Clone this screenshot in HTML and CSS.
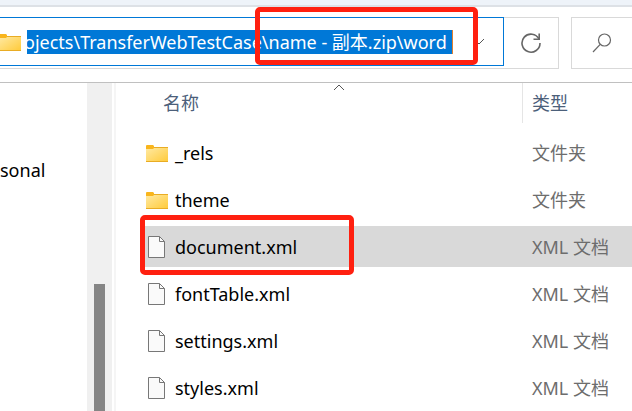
FILE: index.html
```html
<!DOCTYPE html>
<html lang="zh-CN">
<head>
  <meta charset="UTF-8">
  <meta name="viewport" content="width=device-width, initial-scale=1.0">
  <title>word</title>
  <link rel="stylesheet" href="styles.css">
</head>
<body>
  <svg class="defs" aria-hidden="true">
    <defs>
      <linearGradient id="fill" x1="0" y1="0" x2="1" y2="1">
        <stop offset="0" stop-color="#ffe9a2"></stop>
        <stop offset="1" stop-color="#ffca38"></stop>
      </linearGradient>
      <symbol id="folder" viewBox="0 0 22 18">
        <path d="M0 2Q0 1 1 1H7L8 2V3H22V6H0Z" fill="#f9b51c"></path>
        <path d="M0 5H7L8 4H22V18H0Z" fill="url(#fill)"></path>
        <path d="M8 3.5H22M0 17.5H22" stroke="#e9ac24" fill="none"></path>
      </symbol>
      <symbol id="file" viewBox="0 0 17 22">
        <path d="M.5 .5H11.5L16.5 5.5V21.5H.5Z" fill="#fafafa" stroke="#777"></path>
        <path d="M11.5 .5V5.5H16.5" fill="none" stroke="#777"></path>
      </symbol>
    </defs>
  </svg>

  <header class="toolbar">
    <div class="address">
      <div class="path">
        <svg class="folder"><use href="#folder"></use></svg>
        <input type="text" aria-label="地址" value="ojects\TransferWebTestCase\name - 副本.zip\word">
        <button class="history" aria-label="以前的位置">
          <svg width="12" height="8" viewBox="0 0 12 8"><path d="M1 2L5 6L10 1" fill="none" stroke="#555"></path></svg>
        </button>
        <i class="mark"></i>
      </div>
      <button class="refresh" aria-label="刷新">
        <svg width="22" height="22" viewBox="0 0 22 22" fill="none" stroke="#666" stroke-width="1.6">
          <path d="M19 7A9 9 0 1 0 20 11"></path>
          <path d="M19.2 1.5V7.2H13.5"></path>
        </svg>
      </button>
    </div>
    <button class="search" aria-label="搜索">
      <svg width="20" height="20" viewBox="0 0 20 20" fill="none" stroke="#666" stroke-width="1.2">
        <circle cx="12.5" cy="7" r="6"></circle>
        <path d="M8.2 11.4L1 19"></path>
      </svg>
    </button>
  </header>

  <main class="content">
    <nav class="tree">
      <a href="#">sonal</a>
    </nav>
    <div class="scroll"><div class="thumb"></div></div>
    <section class="list">
      <svg class="sort" width="12" height="7" viewBox="0 0 12 7"><path d="M1 6L6 1L11 6" fill="none" stroke="#555"></path></svg>
      <table>
        <thead>
          <tr>
            <th class="name"><span>名称</span></th>
            <th class="type"><span>类型</span></th>
          </tr>
        </thead>
        <tbody>
          <tr>
            <td><div class="item"><svg class="folder"><use href="#folder"></use></svg>_rels</div></td>
            <td class="type">文件夹</td>
          </tr>
          <tr>
            <td><div class="item"><svg class="folder"><use href="#folder"></use></svg>theme</div></td>
            <td class="type">文件夹</td>
          </tr>
          <tr class="active">
            <td><div class="item"><svg class="file"><use href="#file"></use></svg>document.xml</div><i class="mark"></i></td>
            <td class="type">XML 文档</td>
          </tr>
          <tr>
            <td><div class="item"><svg class="file"><use href="#file"></use></svg>fontTable.xml</div></td>
            <td class="type">XML 文档</td>
          </tr>
          <tr>
            <td><div class="item"><svg class="file"><use href="#file"></use></svg>settings.xml</div></td>
            <td class="type">XML 文档</td>
          </tr>
          <tr>
            <td><div class="item"><svg class="file"><use href="#file"></use></svg>styles.xml</div></td>
            <td class="type">XML 文档</td>
          </tr>
        </tbody>
      </table>
    </section>
  </main>
</body>
</html>
```

FILE: styles.css
```css
* {
  box-sizing: border-box;
}

body {
  margin: 0;
  height: 100vh;
  display: flex;
  flex-direction: column;
  overflow: hidden;
  background: #fff;
  color: #000;
  font: 18px/24px "Noto Sans", "Noto Sans CJK SC", sans-serif;
}

button,
input {
  border: none;
  padding: 0;
  background: none;
  font: inherit;
}

.defs {
  position: absolute;
  width: 0;
  height: 0;
}

.folder {
  width: 22px;
  height: 18px;
  flex: none;
}

.file {
  width: 17px;
  height: 22px;
  flex: none;
}

/* 红色标注框 */
.mark {
  position: absolute;
  border: 5px solid #ff2010;
  border-radius: 5px;
  pointer-events: none;
}

/* 地址栏 */
.toolbar {
  display: flex;
  gap: 12px;
  padding: 17px 0 13px;
  border-bottom: 1px solid #c0c0c0;
  background: linear-gradient(#eef3f9 5px, #dde1e6 5px 7px, #fff 7px);
}

.address {
  flex: 1;
  display: flex;
  height: 52px;
  border: 1px solid #d9d9d9;
  border-left: none;
}

.path {
  position: relative;
  flex: 1;
  display: flex;
  align-items: center;
  height: 49px;
  margin-top: -1px;
  border: 1px solid #0078d7;
  border-left: none;
}

.path .folder {
  margin-left: -1px;
}

.path input {
  width: 426px;
  height: 24px;
  margin-left: 6px;
  background: #0078d7;
  border-right: 1px solid #e08030;
  color: #fff;
  text-indent: -3px;
  outline: none;
}

.history {
  flex: 1;
  display: flex;
  align-items: center;
  justify-content: center;
  padding-left: 4px;
}

.path .mark {
  left: 255px;
  top: -11px;
  width: 223px;
  height: 58px;
}

.refresh {
  width: 54px;
  display: flex;
  align-items: center;
  justify-content: center;
}

.search {
  width: 61px;
  height: 52px;
  padding-left: 20px;
  border: 1px solid #d9d9d9;
  border-right: none;
  display: flex;
  align-items: center;
}

/* 主体 */
.content {
  flex: 1;
  display: flex;
  min-height: 0;
}

.tree {
  width: 87px;
  padding-top: 75px;
}

.tree a {
  color: #000;
  text-decoration: none;
}

.scroll {
  width: 25px;
  background: #f0f0f0;
  display: flex;
  justify-content: center;
  padding-top: 201px;
}

.thumb {
  width: 11px;
  background: #858585;
}

.list {
  position: relative;
  flex: 1;
  margin-left: 2px;
  padding-left: 24px;
  border-left: 2px solid #f5f5f5;
}

.sort {
  position: absolute;
  left: 217px;
  top: 1px;
}

table {
  width: 100%;
  border-spacing: 0;
  table-layout: fixed;
}

th {
  height: 46px;
  padding: 0;
  text-align: left;
  vertical-align: top;
  font-weight: normal;
  color: #4c607a;
}

th span {
  display: block;
  padding-left: 23px;
  line-height: 40px;
}

th.name {
  width: 382px;
}

th.type span {
  padding-left: 9px;
  border-left: 1px solid #e5e5e5;
}

td {
  position: relative;
  height: 47px;
  padding: 0;
  border: solid transparent;
  border-width: 3px 0;
  background-clip: padding-box;
}

td.type {
  padding-left: 10px;
  color: #6d6d6d;
}

.item {
  display: flex;
  align-items: center;
  gap: 7px;
  padding-left: 6px;
}

.item .file {
  margin-left: 2px;
  margin-right: 3px;
}

.active td {
  background-color: #d9d9d9;
}

td .mark {
  left: 0;
  top: -11px;
  width: 214px;
  height: 60px;
}
```
